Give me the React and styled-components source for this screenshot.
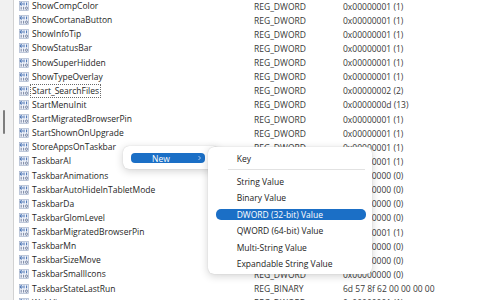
import React from "react";
import styled, { createGlobalStyle } from "styled-components";

const Global = createGlobalStyle`
  html, body { margin: 0; padding: 0; background: #fff; }
  body { font-family: "Open Sans", "Liberation Sans", sans-serif; }
`;

const Page = styled.div`
  position: relative;
  width: 480px;
  height: 300px;
  overflow: hidden;
  display: flex;
  background: #fff;
  font-family: "Open Sans", "Liberation Sans", sans-serif;
`;

const Gutter = styled.div`
  width: 14px;
  flex: none;
  background: #f1f1f1;
  border-right: 1px solid #d2d2d2;
  display: flex;
  flex-direction: column;
  padding-top: 110px;
  box-sizing: border-box;
`;

const Thumb = styled.div`
  width: 2px;
  height: 24px;
  margin-left: 3px;
  background: #7e7e7e;
  border-radius: 1px;
`;

const List = styled.div`
  flex: 1;
  display: flex;
  flex-direction: column;
  margin-top: -1px;
`;

const Row = styled.div`
  display: grid;
  grid-template-columns: 240px 89px 1fr;
  height: 14.13px;
  flex: none;
  align-items: center;
  font-size: 8.5px;
  color: #262626;
  white-space: nowrap;
`;

const NameCell = styled.div`
  display: flex;
  align-items: center;
  gap: 2px;
  padding-left: 5px;
`;

const Name = styled.span`
  line-height: 12px;
  padding: 0 1px;
  margin-left: -1px;
  border: 1px dotted ${(p) => (p.$focus ? "#6a6a6a" : "transparent")};
`;

const Cell = styled.div`
  color: #383838;
`;

const Menu = styled.div`
  position: absolute;
  background: #fff;
  border-radius: 6px;
  box-shadow: 0 2px 8px rgba(0, 0, 0, 0.18), 0 0 1px rgba(0, 0, 0, 0.22);
  font-size: 8.5px;
  color: #1c1c1c;
  box-sizing: border-box;
`;

const NewMenu = styled(Menu)`
  left: 123px;
  top: 146px;
  width: 96px;
  height: 23px;
  padding-top: 7px;
`;

const NewPill = styled.div`
  margin-left: 8px;
  width: 74px;
  height: 10px;
  border-radius: 4px;
  background: #1b6fc6;
  color: #fff;
  display: flex;
  align-items: center;
  justify-content: space-between;
  padding: 0 3px 0 21px;
  box-sizing: border-box;
`;

const SubMenu = styled(Menu)`
  left: 208px;
  top: 147px;
  width: 164px;
  padding: 3px 0 2px;
  display: flex;
  flex-direction: column;
`;

const Item = styled.div`
  height: 16.4px;
  display: flex;
  align-items: center;
  padding: 0 6px 0 8px;
`;

const ItemLabel = styled.div`
  flex: 1;
  height: 11px;
  display: flex;
  align-items: center;
  padding-left: 20.7px;
  border-radius: 5px;
  background: ${(p) => (p.$active ? "#1b6fc6" : "transparent")};
  color: ${(p) => (p.$active ? "#fff" : "#1c1c1c")};
`;

const Separator = styled.div`
  height: 1px;
  margin: 3px 7px 3px 20px;
  background: #e2e2e2;
`;

const RegIcon = () => (
  <svg width="10" height="10" viewBox="0 0 10 10">
    <rect x="0.5" y="0.5" width="9" height="9" fill="#eef2fa" stroke="#9aa9c4" strokeWidth="0.6" />
    <g fill="none" stroke="#2f5fa8" strokeWidth="0.9">
      <ellipse cx="2.2" cy="2.9" rx="0.9" ry="1.4" />
      <line x1="5" y1="1.5" x2="5" y2="4.3" />
      <line x1="7.6" y1="1.5" x2="7.6" y2="4.3" />
    </g>
    <g fill="none" stroke="#6b7896" strokeWidth="0.9">
      <line x1="2.2" y1="5.8" x2="2.2" y2="8.6" />
      <line x1="4.6" y1="5.8" x2="4.6" y2="8.6" />
      <ellipse cx="7.5" cy="7.2" rx="0.9" ry="1.4" />
    </g>
  </svg>
);

const Chevron = () => (
  <svg width="5" height="6" viewBox="0 0 5 6">
    <path d="M1.5 1 L3.5 3 L1.5 5" fill="none" stroke="#cfe0f5" strokeWidth="0.8" />
  </svg>
);

const d = (n) => `0x0000000${n} (${n})`;

const rows = [
  ["ShowCompColor", "REG_DWORD", d(1)],
  ["ShowCortanaButton", "REG_DWORD", d(1)],
  ["ShowInfoTip", "REG_DWORD", d(1)],
  ["ShowStatusBar", "REG_DWORD", d(1)],
  ["ShowSuperHidden", "REG_DWORD", d(1)],
  ["ShowTypeOverlay", "REG_DWORD", d(1)],
  ["Start_SearchFiles", "REG_DWORD", d(2), true],
  ["StartMenuInit", "REG_DWORD", "0x0000000d (13)"],
  ["StartMigratedBrowserPin", "REG_DWORD", d(1)],
  ["StartShownOnUpgrade", "REG_DWORD", d(1)],
  ["StoreAppsOnTaskbar", "REG_DWORD", d(1)],
  ["TaskbarAI", "REG_DWORD", d(1)],
  ["TaskbarAnimations", "REG_DWORD", d(0)],
  ["TaskbarAutoHideInTabletMode", "REG_DWORD", d(0)],
  ["TaskbarDa", "REG_DWORD", d(0)],
  ["TaskbarGlomLevel", "REG_DWORD", d(0)],
  ["TaskbarMigratedBrowserPin", "REG_DWORD", d(1)],
  ["TaskbarMn", "REG_DWORD", d(0)],
  ["TaskbarSizeMove", "REG_DWORD", d(0)],
  ["TaskbarSmallIcons", "REG_DWORD", d(0)],
  ["TaskbarStateLastRun", "REG_BINARY", "6d 57 8f 62 00 00 00 00"],
  ["WebView", "REG_DWORD", d(1)],
];

const items = [
  "String Value",
  "Binary Value",
  "DWORD (32-bit) Value",
  "QWORD (64-bit) Value",
  "Multi-String Value",
  "Expandable String Value",
];

export default function App() {
  return (
    <Page>
      <Global />
      <Gutter>
        <Thumb />
      </Gutter>
      <List>
        {rows.map(([name, type, data, focus]) => (
          <Row key={name}>
            <NameCell>
              <RegIcon />
              <Name $focus={focus}>{name}</Name>
            </NameCell>
            <Cell>{type}</Cell>
            <Cell>{data}</Cell>
          </Row>
        ))}
      </List>
      <NewMenu>
        <NewPill>
          <span>New</span>
          <Chevron />
        </NewPill>
      </NewMenu>
      <SubMenu>
        <Item>
          <ItemLabel>Key</ItemLabel>
        </Item>
        <Separator />
        {items.map((t) => (
          <Item key={t}>
            <ItemLabel $active={t.startsWith("DWORD")}>{t}</ItemLabel>
          </Item>
        ))}
      </SubMenu>
    </Page>
  );
}
